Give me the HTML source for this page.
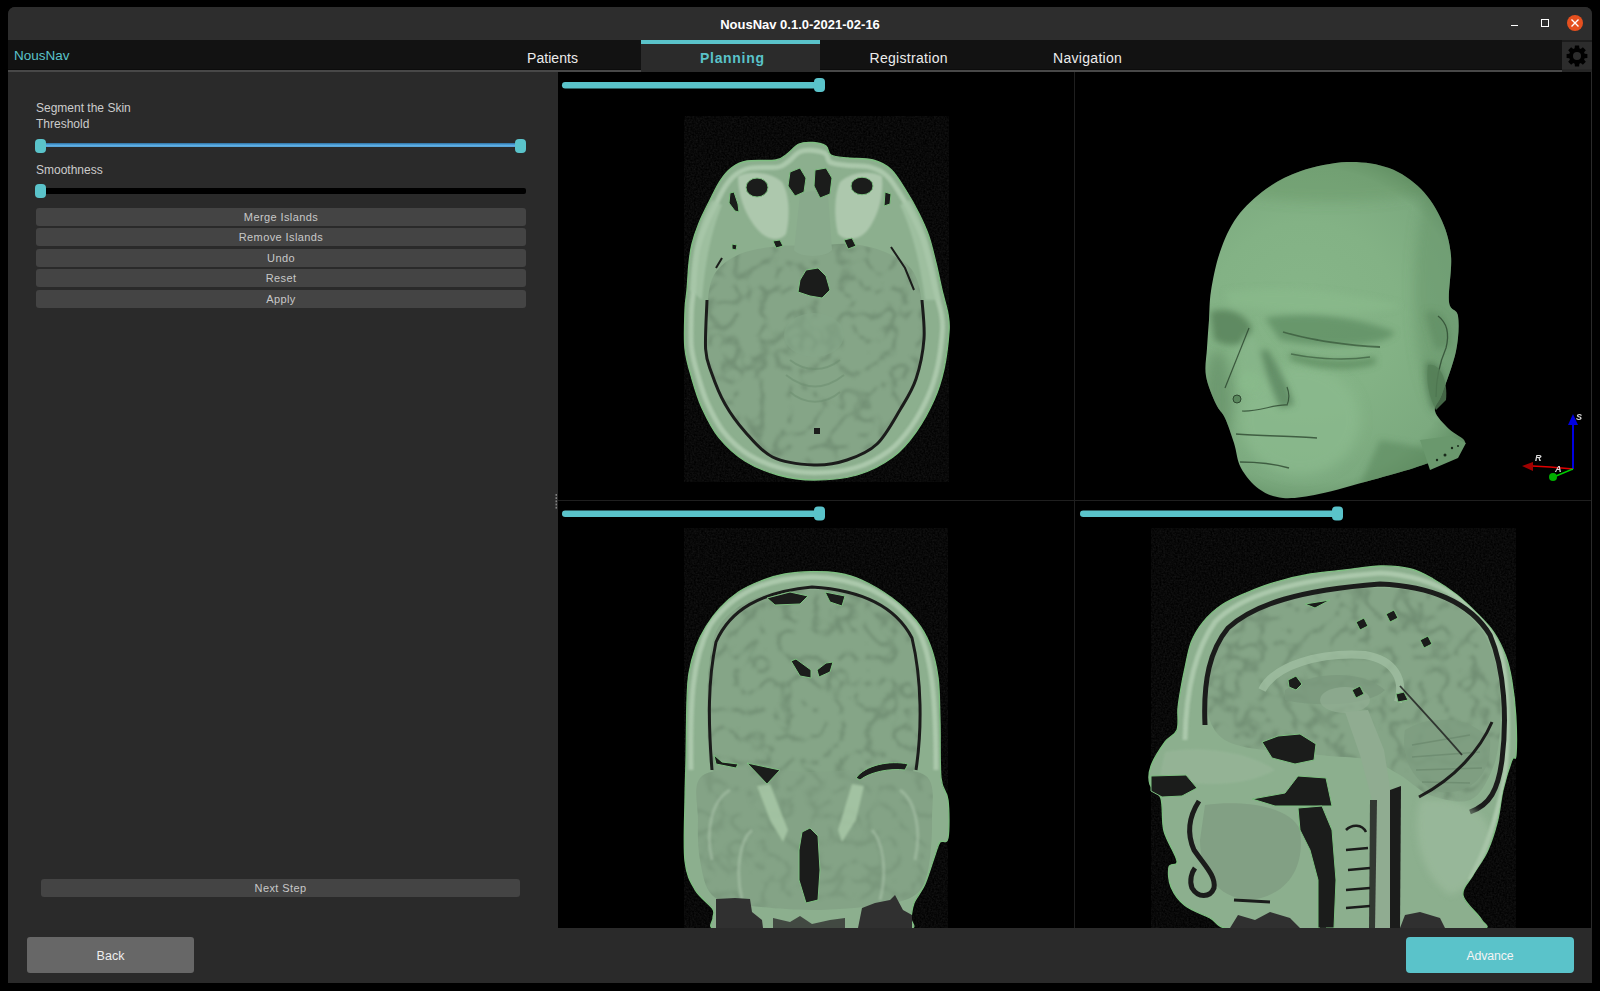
<!DOCTYPE html>
<html><head><meta charset="utf-8">
<style>
*{margin:0;padding:0;box-sizing:border-box}
html,body{width:1600px;height:991px;background:#000;overflow:hidden;font-family:"Liberation Sans",sans-serif}
.a{position:absolute}
#win{left:8px;top:7px;width:1584px;height:976px;background:#2a2a2a;border-radius:7px 7px 0 0;overflow:hidden}
#title{left:0;top:0;width:1584px;height:33px;background:#2d2d2d}
#ttext{left:0;top:1px;width:1584px;height:33px;line-height:33px;text-align:center;color:#fff;font-weight:bold;font-size:13px}
#nav{left:0;top:33px;width:1584px;height:30px;background:#121212}
#navline{left:0;top:63px;width:1554px;height:2px;background:#484848}
#tab{left:633px;top:33px;width:179px;height:32px;background:#2b2b2b}
#tabbar{left:633px;top:33px;width:179px;height:4px;background:#5ac3ca}
.nt{top:36px;height:30px;line-height:31px;color:#ececec;font-size:14px;letter-spacing:0.3px}
#logo{left:6px;top:34px;height:29px;line-height:30px;color:#5ac3ca;font-size:13.5px}
#gear{left:1554px;top:33px;width:30px;height:32px;background:#2c2c2c;border-top:2px solid #1c1c1c;border-bottom:3px solid #262626}
.lbl{color:#cccccc;font-size:12px}
.btn{left:28px;width:490px;height:18px;background:#444;border-radius:3px;color:#c8c8c8;font-size:11px;letter-spacing:0.4px;line-height:19px;text-align:center}
.hdl{width:11px;height:14px;background:#5ac3ca;border-radius:4px}
#view{left:550px;top:65px;width:1034px;height:856px;background:#000}
.vs{height:7px;background:#5ac3ca;border-radius:4px}
</style></head><body>
<div id="win" class="a">
  <div id="title" class="a"></div>
  <div id="ttext" class="a">NousNav 0.1.0-2021-02-16</div>
  <!-- window controls -->
  <div class="a" style="left:1503px;top:17.5px;width:7px;height:1.6px;background:#fff"></div>
  <div class="a" style="left:1533px;top:12px;width:8px;height:8px;border:1.6px solid #fff"></div>
  <div class="a" style="left:1559px;top:8px;width:16px;height:16px;border-radius:50%;background:#e5501f"></div>
  <svg class="a" style="left:1559px;top:8px" width="16" height="16"><path d="M4.5 4.5L11.5 11.5M11.5 4.5L4.5 11.5" stroke="#fff" stroke-width="1.4"/></svg>

  <div id="nav" class="a"></div>
  <div id="navline" class="a"></div>
  <div class="a" style="left:0;top:62px;width:1554px;height:1px;background:#0c0c0c"></div>
  <div id="tab" class="a"></div>
  <div id="tabbar" class="a"></div>
  <div id="logo" class="a">NousNav</div>
  <div class="a nt" style="left:519px;letter-spacing:0.05px">Patients</div>
  <div class="a nt" style="left:692px;color:#5ac3ca;font-weight:bold;letter-spacing:0.7px">Planning</div>
  <div class="a nt" style="left:861.5px">Registration</div>
  <div class="a nt" style="left:1045px">Navigation</div>
  <div id="gear" class="a"></div>
  <svg class="a" style="left:1558px;top:37.5px" width="22" height="22" viewBox="-11 -11 22 22"><path fill="#000" fill-rule="evenodd" d="M-2.36 -7.64L-2.11 -10.39L2.11 -10.39L2.36 -7.64L3.73 -7.08L5.86 -8.84L8.84 -5.86L7.08 -3.73L7.64 -2.36L10.39 -2.11L10.39 2.11L7.64 2.36L7.08 3.73L8.84 5.86L5.86 8.84L3.73 7.08L2.36 7.64L2.11 10.39L-2.11 10.39L-2.36 7.64L-3.73 7.08L-5.86 8.84L-8.84 5.86L-7.08 3.73L-7.64 2.36L-10.39 2.11L-10.39 -2.11L-7.64 -2.36L-7.08 -3.73L-8.84 -5.86L-5.86 -8.84L-3.73 -7.08ZM4.0 0A4.0 4.0 0 1 0 -4.0 0A4.0 4.0 0 1 0 4.0 0Z"/></svg>

  <!-- left panel -->
  <div class="a lbl" style="left:28px;top:94px">Segment the Skin</div>
  <div class="a lbl" style="left:28px;top:110px">Threshold</div>
  <div class="a" style="left:30px;top:136px;width:488px;height:4px;background:linear-gradient(#2f6f9e,#4a9ad2 40%,#6dbdf0 80%,#3a7fb0)"></div>
  <div class="a hdl" style="left:27.3px;top:131.8px"></div>
  <div class="a hdl" style="left:507px;top:132px"></div>
  <div class="a lbl" style="left:28px;top:156px">Smoothness</div>
  <div class="a" style="left:28px;top:181px;width:490px;height:6px;background:#000;border-radius:2px"></div>
  <div class="a hdl" style="left:27.3px;top:177px"></div>
  <div class="a btn" style="top:201px">Merge Islands</div>
  <div class="a btn" style="top:221px">Remove Islands</div>
  <div class="a btn" style="top:242px">Undo</div>
  <div class="a btn" style="top:262px">Reset</div>
  <div class="a btn" style="top:283px">Apply</div>
  <div class="a btn" style="left:33px;width:479px;height:18px;line-height:18px;top:872px">Next Step</div>
  <div class="a" style="left:19px;top:930px;width:167px;height:36px;background:#676767;border-radius:3px;color:#eee;font-size:12.5px;line-height:38px;text-align:center">Back</div>
  <div class="a" style="left:1398px;top:930px;width:168px;height:36px;background:#5ac3ca;border-radius:4px;color:#f4f4f4;font-size:12.3px;letter-spacing:-0.1px;line-height:39px;text-align:center">Advance</div>

  <!-- viewers -->
  <div id="view" class="a">
  </div>
</div>

<svg id="mri" class="a" style="left:0;top:0" width="1600" height="991" viewBox="0 0 1600 991">
<clipPath id="vc"><rect x="550" y="72" width="1042" height="856"/></clipPath>
<g clip-path="url(#vc)">

<defs>
 <radialGradient id="hg" cx="0.42" cy="0.40" r="0.65">
  <stop offset="0" stop-color="#8fbb91"/>
  <stop offset="0.55" stop-color="#84ae86"/>
  <stop offset="0.85" stop-color="#77a17a"/>
  <stop offset="1" stop-color="#5d8461"/>
 </radialGradient>
 <filter id="blur1" filterUnits="userSpaceOnUse" x="0" y="0" width="1600" height="991"><feGaussianBlur stdDeviation="1.2"/></filter>
 <filter id="blur3" filterUnits="userSpaceOnUse" x="0" y="0" width="1600" height="991"><feGaussianBlur stdDeviation="3"/></filter>
 <filter id="gyri" filterUnits="userSpaceOnUse" x="0" y="0" width="1600" height="991" color-interpolation-filters="sRGB">
  <feTurbulence type="turbulence" baseFrequency="0.038" numOctaves="2" seed="11" result="t"/>
  <feColorMatrix in="t" type="matrix" values="0 0 0 0 0.40  0 0 0 0 0.51  0 0 0 0 0.41  -4.2 0 0 0 0.85" result="c"/>
  <feGaussianBlur in="c" stdDeviation="1.4"/>
  <feComposite in2="SourceAlpha" operator="in"/>
 </filter>
 <filter id="spk" filterUnits="userSpaceOnUse" x="0" y="0" width="1600" height="991" color-interpolation-filters="sRGB">
  <feTurbulence type="fractalNoise" baseFrequency="0.55" numOctaves="2" seed="3"/>
  <feColorMatrix type="matrix" values="0.11 0 0 0 -0.02  0.11 0 0 0 -0.02  0.11 0 0 0 -0.02  0 0 0 0 1"/>
  <feComposite in2="SourceAlpha" operator="in"/>
 </filter>
 <filter id="blur6" filterUnits="userSpaceOnUse" x="0" y="0" width="1600" height="991"><feGaussianBlur stdDeviation="6"/></filter>
</defs>

<rect x="1074" y="72" width="1" height="856" fill="#1f1f1f"/>
<rect x="558" y="500" width="1033" height="1" fill="#1f1f1f"/>
<rect x="1591" y="72" width="1" height="856" fill="#2a2a2a"/>
<rect x="684" y="116" width="265" height="366" fill="#0b0b0b" filter="url(#spk)"/>
<path fill="#8caf8e" stroke="#7dbf80" stroke-width="1.3" d="M813.0 142.5C817.5 142.8 823.0 143.9 826.0 146.0C829.0 148.1 827.3 153.0 831.0 155.0C834.7 157.0 841.0 157.2 848.0 158.0C855.0 158.8 865.8 158.1 873.0 160.0C880.2 161.9 885.5 164.4 891.0 169.5C896.5 174.6 901.3 183.2 906.0 190.5C910.7 197.8 915.2 205.9 919.0 213.6C922.8 221.3 926.2 228.4 929.0 236.6C931.8 244.8 933.8 254.1 936.0 263.0C938.2 271.9 940.0 281.5 942.0 290.0C944.0 298.5 946.8 307.0 948.0 314.0C949.2 321.0 949.7 322.8 949.0 332.0C948.3 341.2 946.5 357.7 944.0 369.0C941.5 380.3 938.7 389.5 934.0 400.0C929.3 410.5 922.8 422.5 916.0 432.0C909.2 441.5 902.8 449.8 893.0 457.0C883.2 464.2 870.2 471.2 857.0 475.0C843.8 478.8 827.2 480.0 814.0 480.0C800.8 480.0 789.5 478.2 778.0 475.0C766.5 471.8 754.8 467.2 745.0 461.0C735.2 454.8 726.2 446.4 719.0 437.6C711.8 428.8 706.5 417.8 702.0 408.0C697.5 398.2 694.8 388.8 692.0 379.0C689.2 369.2 686.2 360.5 685.0 349.0C683.8 337.5 684.7 319.8 685.0 310.0C685.3 300.2 686.3 297.8 687.0 290.0C687.7 282.2 688.2 270.7 689.0 263.0C689.8 255.3 690.3 250.7 692.0 244.0C693.7 237.3 696.2 230.0 699.0 223.0C701.8 216.0 705.5 209.0 709.0 202.0C712.5 195.0 716.2 186.8 720.0 181.0C723.8 175.2 727.5 170.8 732.0 167.5C736.5 164.2 739.7 162.2 747.0 161.0C754.3 159.8 769.3 161.2 776.0 160.0C782.7 158.8 783.2 156.7 787.0 154.0C790.8 151.3 794.7 145.9 799.0 144.0C803.3 142.1 808.5 142.2 813.0 142.5Z"/>
<clipPath id="axc"><path d="M813.0 142.5C817.5 142.8 823.0 143.9 826.0 146.0C829.0 148.1 827.3 153.0 831.0 155.0C834.7 157.0 841.0 157.2 848.0 158.0C855.0 158.8 865.8 158.1 873.0 160.0C880.2 161.9 885.5 164.4 891.0 169.5C896.5 174.6 901.3 183.2 906.0 190.5C910.7 197.8 915.2 205.9 919.0 213.6C922.8 221.3 926.2 228.4 929.0 236.6C931.8 244.8 933.8 254.1 936.0 263.0C938.2 271.9 940.0 281.5 942.0 290.0C944.0 298.5 946.8 307.0 948.0 314.0C949.2 321.0 949.7 322.8 949.0 332.0C948.3 341.2 946.5 357.7 944.0 369.0C941.5 380.3 938.7 389.5 934.0 400.0C929.3 410.5 922.8 422.5 916.0 432.0C909.2 441.5 902.8 449.8 893.0 457.0C883.2 464.2 870.2 471.2 857.0 475.0C843.8 478.8 827.2 480.0 814.0 480.0C800.8 480.0 789.5 478.2 778.0 475.0C766.5 471.8 754.8 467.2 745.0 461.0C735.2 454.8 726.2 446.4 719.0 437.6C711.8 428.8 706.5 417.8 702.0 408.0C697.5 398.2 694.8 388.8 692.0 379.0C689.2 369.2 686.2 360.5 685.0 349.0C683.8 337.5 684.7 319.8 685.0 310.0C685.3 300.2 686.3 297.8 687.0 290.0C687.7 282.2 688.2 270.7 689.0 263.0C689.8 255.3 690.3 250.7 692.0 244.0C693.7 237.3 696.2 230.0 699.0 223.0C701.8 216.0 705.5 209.0 709.0 202.0C712.5 195.0 716.2 186.8 720.0 181.0C723.8 175.2 727.5 170.8 732.0 167.5C736.5 164.2 739.7 162.2 747.0 161.0C754.3 159.8 769.3 161.2 776.0 160.0C782.7 158.8 783.2 156.7 787.0 154.0C790.8 151.3 794.7 145.9 799.0 144.0C803.3 142.1 808.5 142.2 813.0 142.5Z"/></clipPath>
<path clip-path="url(#axc)" fill="none" stroke="#b3cfb3" stroke-width="5" opacity="0.8" filter="url(#blur1)" d="M813.1 150.4C817.4 150.7 822.6 151.8 825.5 153.7C828.4 155.7 826.8 160.4 830.2 162.3C833.7 164.2 839.8 164.4 846.4 165.2C853.0 166.0 863.3 165.3 870.1 167.1C877.0 168.9 882.0 171.3 887.2 176.2C892.5 181.0 897.1 189.2 901.5 196.2C905.9 203.3 910.2 211.0 913.9 218.3C917.5 225.6 920.7 232.4 923.4 240.3C926.0 248.1 927.9 257.0 930.0 265.5C932.1 274.0 933.8 283.1 935.7 291.3C937.6 299.4 940.3 307.5 941.4 314.2C942.5 320.9 943.0 322.6 942.4 331.4C941.7 340.1 940.0 355.9 937.6 366.7C935.2 377.5 932.5 386.3 928.1 396.3C923.7 406.3 917.5 417.8 911.0 426.9C904.5 435.9 898.5 443.9 889.1 450.7C879.8 457.6 867.5 464.3 855.0 467.9C842.4 471.6 826.6 472.7 814.1 472.7C801.6 472.7 790.8 471.0 779.9 467.9C769.0 464.9 757.9 460.5 748.5 454.6C739.2 448.6 730.7 440.7 723.9 432.2C717.0 423.8 712.0 413.3 707.7 403.9C703.4 394.6 700.9 385.6 698.2 376.3C695.5 366.9 692.7 358.6 691.5 347.6C690.4 336.6 691.2 319.8 691.5 310.4C691.9 301.0 692.8 298.7 693.5 291.3C694.1 283.8 694.6 272.8 695.4 265.5C696.1 258.2 696.6 253.7 698.2 247.3C699.8 241.0 702.2 234.0 704.9 227.3C707.5 220.6 711.0 213.9 714.4 207.2C717.7 200.5 721.2 192.7 724.8 187.2C728.4 181.7 731.9 177.5 736.2 174.3C740.5 171.1 743.5 169.3 750.5 168.1C757.4 166.9 771.7 168.2 778.0 167.1C784.3 166.0 784.8 163.9 788.5 161.4C792.1 158.8 795.7 153.7 799.9 151.8C804.0 150.0 808.9 150.1 813.1 150.4Z"/>
<path fill="#85a587" d="M814.0 246.0C825.7 245.7 838.2 243.0 850.0 244.0C861.8 245.0 874.7 247.7 885.0 252.0C895.3 256.3 905.8 261.7 912.0 270.0C918.2 278.3 920.0 290.5 922.0 302.0C924.0 313.5 925.0 326.2 924.0 339.0C923.0 351.8 919.9 367.1 916.0 378.6C912.1 390.1 907.0 397.2 900.5 408.0C894.0 418.8 885.9 435.0 877.0 443.5C868.1 452.0 857.5 455.6 847.0 459.0C836.5 462.4 826.4 464.3 814.0 464.0C801.6 463.7 784.0 462.4 772.5 457.0C761.0 451.6 752.9 440.5 745.0 431.7C737.1 422.9 730.6 413.8 725.0 404.0C719.4 394.2 714.7 381.9 711.5 372.7C708.3 363.5 706.4 359.4 705.6 349.0C704.9 338.6 705.6 322.3 707.0 310.0C708.4 297.7 708.5 284.3 714.0 275.0C719.5 265.7 729.0 258.8 740.0 254.0C751.0 249.2 767.7 247.3 780.0 246.0C792.3 244.7 802.3 246.3 814.0 246.0Z"/>
<path fill="#000" filter="url(#gyri)" opacity="0.8" d="M814.0 246.0C825.7 245.7 838.2 243.0 850.0 244.0C861.8 245.0 874.7 247.7 885.0 252.0C895.3 256.3 905.8 261.7 912.0 270.0C918.2 278.3 920.0 290.5 922.0 302.0C924.0 313.5 925.0 326.2 924.0 339.0C923.0 351.8 919.9 367.1 916.0 378.6C912.1 390.1 907.0 397.2 900.5 408.0C894.0 418.8 885.9 435.0 877.0 443.5C868.1 452.0 857.5 455.6 847.0 459.0C836.5 462.4 826.4 464.3 814.0 464.0C801.6 463.7 784.0 462.4 772.5 457.0C761.0 451.6 752.9 440.5 745.0 431.7C737.1 422.9 730.6 413.8 725.0 404.0C719.4 394.2 714.7 381.9 711.5 372.7C708.3 363.5 706.4 359.4 705.6 349.0C704.9 338.6 705.6 322.3 707.0 310.0C708.4 297.7 708.5 284.3 714.0 275.0C719.5 265.7 729.0 258.8 740.0 254.0C751.0 249.2 767.7 247.3 780.0 246.0C792.3 244.7 802.3 246.3 814.0 246.0Z"/>
<path fill="none" stroke="#1b1c1b" stroke-width="3" d="M707.0 300.0C706.8 308.2 704.9 336.9 705.6 349.0C706.4 361.1 708.3 363.5 711.5 372.7C714.7 381.9 719.4 394.2 725.0 404.0C730.6 413.8 737.1 422.9 745.0 431.7C752.9 440.5 761.0 451.4 772.5 457.0C784.0 462.6 801.6 464.5 814.0 465.0C826.4 465.5 836.5 463.5 847.0 460.0C857.5 456.5 868.1 452.5 877.0 444.0C885.9 435.5 894.0 419.8 900.5 409.0C907.0 398.2 912.1 390.7 916.0 379.0C919.9 367.3 923.0 352.2 924.0 339.0C925.0 325.8 922.3 306.5 922.0 300.0"/>
<path fill="#a6c6a7" opacity="0.7" filter="url(#blur1)" d="M690 290 C692 250 700 220 712 200 L722 205 C712 230 705 260 702 300Z"/>
<path fill="#a6c6a7" opacity="0.7" filter="url(#blur1)" d="M940 300 C935 260 925 225 910 200 L900 205 C912 230 920 262 925 300Z"/>
<path fill="#adc8ad" filter="url(#blur1)" d="M738 176 C750 170 770 172 782 182 C790 195 790 218 786 234 C780 242 768 240 760 232 C748 220 738 200 738 176Z"/>
<path fill="#adc8ad" filter="url(#blur1)" d="M882 176 C870 170 850 172 840 182 C834 195 834 218 838 234 C846 242 858 240 866 232 C876 220 884 200 882 176Z"/>
<path fill="#89aa8c" d="M800 195 C805 190 822 190 828 195 L832 250 C825 258 800 258 794 250Z"/>
<ellipse cx="757" cy="187.5" rx="11" ry="9.5" fill="#1b1c1b" stroke="#7dbf80"/>
<ellipse cx="862" cy="186" rx="11" ry="8.8" fill="#1b1c1b" stroke="#7dbf80"/>
<path fill="#1b1c1b" stroke="#7dbf80" stroke-width="1" d="M790 172 L800 168 L806 178 L804 192 L795 196 L788 186Z"/>
<path fill="#1b1c1b" stroke="#7dbf80" stroke-width="1" d="M815 170 L826 168 L832 178 L830 194 L820 198 L814 186Z"/>
<path fill="#1b1c1b" stroke="#7dbf80" stroke-width="1" d="M885 192 L891 194 L890 204 L884 206Z"/>
<path fill="#1b1c1b" stroke="#7dbf80" stroke-width="1" d="M800 280 L806 270 L818 268 L826 276 L830 290 L822 298 L810 296 L798 292Z"/>
<path fill="#1b1c1b" stroke="#7dbf80" stroke-width="1" d="M730 193 L734 192 L738 204 L739 212 L735 211 L729 203Z"/>
<path fill="#1b1c1b" stroke="#7dbf80" stroke-width="1" d="M773 241 L780 240 L783 246 L776 248Z M732 244 L737 245 L736 250 L732 249Z M844 240 L852 238 L856 246 L848 249Z"/>
<path fill="none" stroke="#1b1c1b" stroke-width="2" d="M891 247 L905 268 L914 290"/>
<path fill="none" stroke="#1b1c1b" stroke-width="2" d="M722 258 L716 268"/>
<ellipse cx="814" cy="335" rx="30" ry="22" fill="#86a689" opacity="0.6"/>
<path fill="none" stroke="#6e8f72" stroke-width="2" opacity="0.6" d="M790 360 C805 372 825 372 840 360 M786 375 C805 390 825 390 844 375 M790 392 C805 405 825 405 840 392"/>
<rect x="814" y="428" width="6" height="6" fill="#1b1c1b"/>
<radialGradient id="hg2" gradientUnits="userSpaceOnUse" cx="1310" cy="330" r="185" fx="1300" fy="300"><stop offset="0" stop-color="#86b588"/><stop offset="0.5" stop-color="#83b285"/><stop offset="0.85" stop-color="#7caa7f"/><stop offset="1" stop-color="#628f65"/></radialGradient>
<clipPath id="hc"><path d="M1347.0 162.0C1361.7 161.5 1376.7 163.5 1389.0 168.0C1401.3 172.5 1412.2 180.2 1421.0 189.0C1429.8 197.8 1437.0 209.8 1442.0 221.0C1447.0 232.2 1449.8 242.5 1451.0 256.0C1452.2 269.5 1447.8 292.0 1449.0 302.0C1450.2 312.0 1456.8 307.8 1458.0 316.0C1459.2 324.2 1458.7 338.0 1456.0 351.0C1453.3 364.0 1445.5 384.0 1442.0 394.0C1438.5 404.0 1433.8 405.2 1435.0 411.0C1436.2 416.8 1444.0 423.7 1449.0 429.0C1454.0 434.3 1466.2 438.3 1465.0 443.0C1463.8 447.7 1450.5 452.8 1442.0 457.0C1433.5 461.2 1425.7 464.2 1414.0 468.0C1402.3 471.8 1387.8 475.7 1372.0 480.0C1356.2 484.3 1333.8 491.0 1319.0 494.0C1304.2 497.0 1293.0 498.8 1283.0 498.0C1273.0 497.2 1266.0 494.0 1259.0 489.0C1252.0 484.0 1245.2 475.7 1241.0 468.0C1236.8 460.3 1236.7 451.3 1234.0 443.0C1231.3 434.7 1228.0 424.5 1225.0 418.0C1222.0 411.5 1219.2 411.0 1216.0 404.0C1212.8 397.0 1207.5 385.3 1206.0 376.0C1204.5 366.7 1206.5 357.3 1207.0 348.0C1207.5 338.7 1208.3 329.5 1209.0 320.0C1209.7 310.5 1209.2 302.3 1211.0 291.0C1212.8 279.7 1215.7 264.3 1220.0 252.0C1224.3 239.7 1229.3 227.5 1237.0 217.0C1244.7 206.5 1255.3 196.7 1266.0 189.0C1276.7 181.3 1287.5 175.5 1301.0 171.0C1314.5 166.5 1332.3 162.5 1347.0 162.0Z"/></clipPath>
<path fill="url(#hg2)" d="M1347.0 162.0C1361.7 161.5 1376.7 163.5 1389.0 168.0C1401.3 172.5 1412.2 180.2 1421.0 189.0C1429.8 197.8 1437.0 209.8 1442.0 221.0C1447.0 232.2 1449.8 242.5 1451.0 256.0C1452.2 269.5 1447.8 292.0 1449.0 302.0C1450.2 312.0 1456.8 307.8 1458.0 316.0C1459.2 324.2 1458.7 338.0 1456.0 351.0C1453.3 364.0 1445.5 384.0 1442.0 394.0C1438.5 404.0 1433.8 405.2 1435.0 411.0C1436.2 416.8 1444.0 423.7 1449.0 429.0C1454.0 434.3 1466.2 438.3 1465.0 443.0C1463.8 447.7 1450.5 452.8 1442.0 457.0C1433.5 461.2 1425.7 464.2 1414.0 468.0C1402.3 471.8 1387.8 475.7 1372.0 480.0C1356.2 484.3 1333.8 491.0 1319.0 494.0C1304.2 497.0 1293.0 498.8 1283.0 498.0C1273.0 497.2 1266.0 494.0 1259.0 489.0C1252.0 484.0 1245.2 475.7 1241.0 468.0C1236.8 460.3 1236.7 451.3 1234.0 443.0C1231.3 434.7 1228.0 424.5 1225.0 418.0C1222.0 411.5 1219.2 411.0 1216.0 404.0C1212.8 397.0 1207.5 385.3 1206.0 376.0C1204.5 366.7 1206.5 357.3 1207.0 348.0C1207.5 338.7 1208.3 329.5 1209.0 320.0C1209.7 310.5 1209.2 302.3 1211.0 291.0C1212.8 279.7 1215.7 264.3 1220.0 252.0C1224.3 239.7 1229.3 227.5 1237.0 217.0C1244.7 206.5 1255.3 196.7 1266.0 189.0C1276.7 181.3 1287.5 175.5 1301.0 171.0C1314.5 166.5 1332.3 162.5 1347.0 162.0Z"/>
<g clip-path="url(#hc)">
<g filter="url(#blur6)">
<ellipse cx="1330" cy="178" rx="120" ry="24" fill="#62905f" opacity="0.35"/>
<ellipse cx="1448" cy="290" rx="34" ry="125" fill="#66936a" opacity="0.5"/>
<ellipse cx="1300" cy="420" rx="60" ry="55" fill="#8cbb8e" opacity="0.7"/>
<ellipse cx="1218" cy="400" rx="14" ry="50" fill="#5f8b62" opacity="0.6"/>
</g>
<g filter="url(#blur3)">
<path fill="#557f58" opacity="0.8" d="M1210 312 C1225 306 1245 312 1252 328 C1248 345 1232 350 1214 340Z"/>
<path fill="#5d8a60" opacity="0.7" d="M1265 318 C1310 310 1360 318 1395 332 C1390 346 1330 350 1280 340Z"/>
<path fill="#5a875d" opacity="0.7" d="M1290 352 C1320 362 1355 362 1375 356 L1376 364 C1350 372 1318 370 1290 360Z"/>
<path fill="#8aba8c" opacity="0.6" d="M1225 292 C1270 285 1340 290 1400 305 C1390 316 1300 314 1230 306Z"/>
<path fill="#88b78a" opacity="0.7" d="M1252 335 C1262 350 1268 372 1260 392 L1240 392 C1238 370 1240 350 1244 335Z"/>
<circle cx="1250" cy="382" r="11" fill="#8aba8c" opacity="0.7"/>
<path fill="#567f59" opacity="0.7" d="M1268 350 C1280 370 1290 388 1294 405 L1280 408 C1272 390 1264 370 1260 350Z"/>
<path fill="#5b885e" opacity="0.6" d="M1380 440 C1410 445 1440 450 1450 460 L1400 490 L1360 485Z"/>
<path fill="#4f7852" opacity="0.7" d="M1426 362 C1440 360 1450 382 1446 405 L1432 410 C1426 392 1424 375 1426 362Z"/>
<path fill="#5d8a60" opacity="0.6" d="M1425 312 C1440 306 1452 322 1450 346 L1436 350 C1430 335 1427 322 1425 312Z"/>
</g>
</g>
<path fill="none" stroke="#2d472f" stroke-width="1.3" opacity="0.8" d="M1438 316 C1446 322 1450 332 1446 348 C1440 362 1436 380 1436 397"/>
<path fill="#557f58" opacity="0.8" d="M1428 365 C1440 362 1448 380 1446 400 L1436 410 C1428 395 1426 380 1428 365Z"/>
<path fill="none" stroke="#2d472f" stroke-width="1.2" opacity="0.85" d="M1249 328 C1240 350 1232 370 1225 388"/>
<circle cx="1237" cy="399" r="4" fill="#5a875d" stroke="#2d472f" stroke-width="1"/>
<path fill="none" stroke="#2d472f" stroke-width="1.2" opacity="0.8" d="M1242 411 C1258 412 1275 404 1287 405 C1290 398 1289 392 1287 387"/>
<path fill="none" stroke="#3b5b3d" stroke-width="1.8" opacity="0.8" d="M1283 332 C1310 340 1350 346 1380 347"/>
<path fill="none" stroke="#3b5b3d" stroke-width="1.5" opacity="0.7" d="M1291 354 C1320 360 1350 360 1370 357"/>
<path fill="none" stroke="#2d472f" stroke-width="1.6" opacity="0.8" d="M1236 434 C1260 436 1295 436 1317 438"/>
<path fill="none" stroke="#2d472f" stroke-width="1.6" opacity="0.8" d="M1240 462 C1258 462 1275 464 1289 468"/>
<path fill="#6a986d" d="M1420 440 L1450 436 L1466 443 L1458 458 L1430 470 Z"/>
<circle cx="1445" cy="455" r="1.5" fill="#1a2a1b"/><circle cx="1452" cy="448" r="1.2" fill="#1a2a1b"/><circle cx="1437" cy="460" r="1.2" fill="#1a2a1b"/><circle cx="1458" cy="446" r="1" fill="#1a2a1b"/>
<rect x="684" y="528" width="264" height="400" fill="#0b0b0b" filter="url(#spk)"/>
<path fill="#8caf8e" stroke="#7dbf80" stroke-width="1.3" d="M811.0 571.7C819.7 571.5 828.6 571.6 837.0 573.0C845.4 574.4 852.4 575.8 861.6 580.0C870.8 584.2 882.9 591.2 892.0 598.0C901.1 604.8 909.7 612.7 916.0 620.5C922.3 628.3 926.3 635.3 930.0 644.7C933.7 654.1 936.3 664.3 938.0 677.0C939.7 689.7 939.5 704.2 940.0 721.0C940.5 737.8 939.7 764.8 941.0 778.0C942.3 791.2 946.8 790.0 948.0 800.0C949.2 810.0 949.3 831.0 948.0 838.0C946.7 845.0 942.2 839.2 940.0 842.0C937.8 844.8 937.5 848.0 935.0 855.0C932.5 862.0 928.5 876.0 925.0 884.0C921.5 892.0 916.3 897.3 914.0 903.0C911.7 908.7 911.7 913.7 911.0 918.0C910.3 922.3 918.5 927.0 910.0 929.0C901.5 931.0 885.0 929.8 860.0 930.0C835.0 930.2 784.2 930.2 760.0 930.0C735.8 929.8 722.3 931.0 714.5 929.0C706.7 927.0 713.3 921.4 713.0 918.0C712.7 914.6 715.6 913.4 712.6 908.7C709.6 904.0 699.6 897.6 695.0 889.6C690.4 881.6 686.7 875.9 685.0 861.0C683.3 846.1 684.8 816.8 685.0 800.0C685.2 783.2 685.7 776.5 686.0 760.0C686.3 743.5 686.5 715.5 687.0 701.0C687.5 686.5 687.5 682.0 689.0 673.0C690.5 664.0 693.2 654.5 696.0 646.8C698.8 639.1 702.0 633.1 706.0 626.6C710.0 620.1 714.6 613.8 720.0 608.0C725.4 602.2 731.7 596.5 738.5 592.0C745.3 587.5 753.0 584.0 760.7 581.0C768.5 578.0 776.6 575.5 785.0 574.0C793.4 572.5 802.3 571.9 811.0 571.7Z"/>
<clipPath id="coc"><path d="M811.0 571.7C819.7 571.5 828.6 571.6 837.0 573.0C845.4 574.4 852.4 575.8 861.6 580.0C870.8 584.2 882.9 591.2 892.0 598.0C901.1 604.8 909.7 612.7 916.0 620.5C922.3 628.3 926.3 635.3 930.0 644.7C933.7 654.1 936.3 664.3 938.0 677.0C939.7 689.7 939.5 704.2 940.0 721.0C940.5 737.8 939.7 764.8 941.0 778.0C942.3 791.2 946.8 790.0 948.0 800.0C949.2 810.0 949.3 831.0 948.0 838.0C946.7 845.0 942.2 839.2 940.0 842.0C937.8 844.8 937.5 848.0 935.0 855.0C932.5 862.0 928.5 876.0 925.0 884.0C921.5 892.0 916.3 897.3 914.0 903.0C911.7 908.7 911.7 913.7 911.0 918.0C910.3 922.3 918.5 927.0 910.0 929.0C901.5 931.0 885.0 929.8 860.0 930.0C835.0 930.2 784.2 930.2 760.0 930.0C735.8 929.8 722.3 931.0 714.5 929.0C706.7 927.0 713.3 921.4 713.0 918.0C712.7 914.6 715.6 913.4 712.6 908.7C709.6 904.0 699.6 897.6 695.0 889.6C690.4 881.6 686.7 875.9 685.0 861.0C683.3 846.1 684.8 816.8 685.0 800.0C685.2 783.2 685.7 776.5 686.0 760.0C686.3 743.5 686.5 715.5 687.0 701.0C687.5 686.5 687.5 682.0 689.0 673.0C690.5 664.0 693.2 654.5 696.0 646.8C698.8 639.1 702.0 633.1 706.0 626.6C710.0 620.1 714.6 613.8 720.0 608.0C725.4 602.2 731.7 596.5 738.5 592.0C745.3 587.5 753.0 584.0 760.7 581.0C768.5 578.0 776.6 575.5 785.0 574.0C793.4 572.5 802.3 571.9 811.0 571.7Z"/></clipPath>
<path clip-path="url(#coc)" fill="none" stroke="#b3cfb3" stroke-width="5" opacity="0.8" filter="url(#blur1)" d="M691 770 C690 700 692 660 710 625 C735 590 770 578 812 577 C855 578 890 592 915 625 C932 650 936 700 936 770"/>
<path fill="#85a587" d="M812.0 590.0C824.5 590.0 837.8 589.3 850.0 592.0C862.2 594.7 875.3 599.3 885.0 606.0C894.7 612.7 902.5 619.7 908.0 632.0C913.5 644.3 916.0 662.0 918.0 680.0C920.0 698.0 921.0 724.7 920.0 740.0C919.0 755.3 918.7 765.3 912.0 772.0C905.3 778.7 896.7 778.3 880.0 780.0C863.3 781.7 834.5 782.0 812.0 782.0C789.5 782.0 761.3 781.7 745.0 780.0C728.7 778.3 720.2 778.7 714.0 772.0C707.8 765.3 709.0 755.3 708.0 740.0C707.0 724.7 706.7 698.0 708.0 680.0C709.3 662.0 710.7 644.3 716.0 632.0C721.3 619.7 730.2 612.7 740.0 606.0C749.8 599.3 763.0 594.7 775.0 592.0C787.0 589.3 799.5 590.0 812.0 590.0Z"/>
<path fill="#000" filter="url(#gyri)" opacity="0.8" d="M812.0 590.0C824.5 590.0 837.8 589.3 850.0 592.0C862.2 594.7 875.3 599.3 885.0 606.0C894.7 612.7 902.5 619.7 908.0 632.0C913.5 644.3 916.0 662.0 918.0 680.0C920.0 698.0 921.0 724.7 920.0 740.0C919.0 755.3 918.7 765.3 912.0 772.0C905.3 778.7 896.7 778.3 880.0 780.0C863.3 781.7 834.5 782.0 812.0 782.0C789.5 782.0 761.3 781.7 745.0 780.0C728.7 778.3 720.2 778.7 714.0 772.0C707.8 765.3 709.0 755.3 708.0 740.0C707.0 724.7 706.7 698.0 708.0 680.0C709.3 662.0 710.7 644.3 716.0 632.0C721.3 619.7 730.2 612.7 740.0 606.0C749.8 599.3 763.0 594.7 775.0 592.0C787.0 589.3 799.5 590.0 812.0 590.0Z"/>
<path fill="none" stroke="#1b1c1b" stroke-width="3" d="M712 770 C708 720 708 680 716 642 C730 610 760 592 812 587 C860 590 895 605 912 638 C922 680 922 730 916 770"/>
<path fill="#1b1c1b" stroke="#7dbf80" stroke-width="1" d="M767 598 L790 592 L808 596 L800 604 L775 605 Z M825 592 L845 596 L842 606 L830 602Z"/>
<path fill="#1b1c1b" stroke="#7dbf80" stroke-width="1" d="M791 661 L796 659 L811 670 L811 678 L800 676 Z M817 670 L826 663 L833 662 L830 672 L819 677Z"/>
<path fill="#84a386" d="M702.0 776.0C712.3 767.7 741.7 770.7 760.0 770.0C778.3 769.3 793.7 772.0 812.0 772.0C830.3 772.0 851.0 769.3 870.0 770.0C889.0 770.7 915.7 767.7 926.0 776.0C936.3 784.3 931.7 804.3 932.0 820.0C932.3 835.7 930.8 857.5 928.0 870.0C925.2 882.5 923.0 889.2 915.0 895.0C907.0 900.8 897.2 902.5 880.0 905.0C862.8 907.5 834.5 910.0 812.0 910.0C789.5 910.0 761.7 907.5 745.0 905.0C728.3 902.5 719.5 902.5 712.0 895.0C704.5 887.5 702.3 872.5 700.0 860.0C697.7 847.5 697.7 834.0 698.0 820.0C698.3 806.0 691.7 784.3 702.0 776.0Z"/>
<path fill="#000" filter="url(#gyri)" opacity="0.45" d="M702.0 776.0C712.3 767.7 741.7 770.7 760.0 770.0C778.3 769.3 793.7 772.0 812.0 772.0C830.3 772.0 851.0 769.3 870.0 770.0C889.0 770.7 915.7 767.7 926.0 776.0C936.3 784.3 931.7 804.3 932.0 820.0C932.3 835.7 930.8 857.5 928.0 870.0C925.2 882.5 923.0 889.2 915.0 895.0C907.0 900.8 897.2 902.5 880.0 905.0C862.8 907.5 834.5 910.0 812.0 910.0C789.5 910.0 761.7 907.5 745.0 905.0C728.3 902.5 719.5 902.5 712.0 895.0C704.5 887.5 702.3 872.5 700.0 860.0C697.7 847.5 697.7 834.0 698.0 820.0C698.3 806.0 691.7 784.3 702.0 776.0Z"/>
<path fill="none" stroke="#a9c3a9" stroke-width="3" opacity="0.6" filter="url(#blur1)" d="M712 860 C705 830 712 800 730 790 M915 860 C922 830 915 800 900 790 M742 900 C735 870 740 840 752 830 M880 900 C888 870 882 840 872 830"/>
<path fill="#aacaa9" opacity="0.8" filter="url(#blur1)" d="M757 786 L770 784 L788 830 L783 842 L770 820Z"/>
<path fill="#aacaa9" opacity="0.8" filter="url(#blur1)" d="M864 786 L852 784 L838 830 L842 842 L856 820Z"/>
<path fill="#1b1c1b" stroke="#7dbf80" stroke-width="1" d="M747 763 L780 770 L767 784 Z"/>
<path fill="#1b1c1b" stroke="#7dbf80" stroke-width="1" d="M856 778 C865 765 890 760 908 764 L905 770 C890 768 870 772 860 780Z"/>
<path fill="#1b1c1b" stroke="#7dbf80" stroke-width="1" d="M714 755 L722 762 L738 764 L736 768 L716 764Z"/>
<path fill="#1b1c1b" stroke="#7dbf80" stroke-width="1" d="M802 832 L810 828 L818 836 L820 870 L818 900 L806 903 L799 880 L799 850Z"/>
<path fill="#303030" d="M716 899 L735 898 L750 899 L752 912 L762 920 L763 928 L716 928Z"/>
<path fill="#303030" d="M862 908 L875 903 L890 900 L895 895 L903 910 L912 915 L912 928 L858 928Z"/>
<path fill="#303030" opacity="0.8" d="M773 918 L790 922 L800 916 L812 924 L830 920 L845 918 L845 928 L773 928Z"/>
<rect x="1151" y="528" width="365" height="400" fill="#0b0b0b" filter="url(#spk)"/>
<path fill="#8caf8e" stroke="#7dbf80" stroke-width="1.3" d="M1345.0 570.0C1356.7 568.7 1369.5 566.2 1380.5 566.0C1391.5 565.8 1402.0 566.8 1410.8 569.0C1419.5 571.2 1425.3 574.7 1433.0 579.0C1440.7 583.3 1449.7 589.2 1457.0 595.0C1464.3 600.8 1470.9 607.3 1477.0 613.5C1483.1 619.7 1488.8 624.9 1493.6 632.0C1498.4 639.1 1502.7 648.0 1505.7 656.0C1508.7 664.0 1510.0 670.0 1511.7 680.0C1513.4 690.0 1515.1 703.5 1515.8 716.0C1516.5 728.5 1516.6 747.7 1516.0 755.0C1515.4 762.3 1514.2 754.2 1512.0 760.0C1509.8 765.8 1505.4 779.9 1503.0 790.0C1500.6 800.1 1500.2 810.6 1497.6 820.8C1495.0 831.0 1491.6 842.0 1487.5 851.0C1483.4 860.0 1477.1 867.6 1473.0 875.0C1468.9 882.4 1461.6 888.0 1463.0 895.5C1464.4 903.0 1478.7 914.1 1481.5 919.7C1484.3 925.3 1493.6 927.3 1480.0 929.0C1466.4 930.7 1430.0 929.8 1400.0 930.0C1370.0 930.2 1328.3 930.2 1300.0 930.0C1271.7 929.8 1245.0 931.0 1230.0 929.0C1215.0 927.0 1217.5 921.9 1210.0 918.0C1202.5 914.1 1191.5 910.8 1185.0 905.6C1178.5 900.4 1173.7 893.4 1171.0 887.0C1168.3 880.6 1168.0 871.3 1169.0 867.0C1170.0 862.7 1177.8 867.0 1177.0 861.0C1176.2 855.0 1166.7 841.4 1164.0 831.0C1161.3 820.6 1163.3 806.4 1161.0 798.6C1158.7 790.9 1151.7 789.9 1150.0 784.5C1148.3 779.1 1148.5 773.1 1151.0 766.0C1153.5 758.9 1160.7 748.0 1165.0 742.0C1169.3 736.0 1174.8 735.7 1177.0 730.0C1179.2 724.3 1177.3 715.0 1178.0 708.0C1178.7 701.0 1179.8 694.7 1181.0 688.0C1182.2 681.3 1183.3 675.7 1185.0 668.0C1186.7 660.3 1188.3 649.5 1191.4 641.8C1194.5 634.1 1198.5 627.7 1203.5 621.6C1208.5 615.5 1214.6 609.8 1221.7 605.0C1228.8 600.2 1237.0 596.8 1246.0 593.0C1255.0 589.2 1265.2 585.2 1276.0 582.0C1286.8 578.8 1299.0 576.0 1310.5 574.0C1322.0 572.0 1333.3 571.3 1345.0 570.0Z"/>
<clipPath id="sac"><path d="M1345.0 570.0C1356.7 568.7 1369.5 566.2 1380.5 566.0C1391.5 565.8 1402.0 566.8 1410.8 569.0C1419.5 571.2 1425.3 574.7 1433.0 579.0C1440.7 583.3 1449.7 589.2 1457.0 595.0C1464.3 600.8 1470.9 607.3 1477.0 613.5C1483.1 619.7 1488.8 624.9 1493.6 632.0C1498.4 639.1 1502.7 648.0 1505.7 656.0C1508.7 664.0 1510.0 670.0 1511.7 680.0C1513.4 690.0 1515.1 703.5 1515.8 716.0C1516.5 728.5 1516.6 747.7 1516.0 755.0C1515.4 762.3 1514.2 754.2 1512.0 760.0C1509.8 765.8 1505.4 779.9 1503.0 790.0C1500.6 800.1 1500.2 810.6 1497.6 820.8C1495.0 831.0 1491.6 842.0 1487.5 851.0C1483.4 860.0 1477.1 867.6 1473.0 875.0C1468.9 882.4 1461.6 888.0 1463.0 895.5C1464.4 903.0 1478.7 914.1 1481.5 919.7C1484.3 925.3 1493.6 927.3 1480.0 929.0C1466.4 930.7 1430.0 929.8 1400.0 930.0C1370.0 930.2 1328.3 930.2 1300.0 930.0C1271.7 929.8 1245.0 931.0 1230.0 929.0C1215.0 927.0 1217.5 921.9 1210.0 918.0C1202.5 914.1 1191.5 910.8 1185.0 905.6C1178.5 900.4 1173.7 893.4 1171.0 887.0C1168.3 880.6 1168.0 871.3 1169.0 867.0C1170.0 862.7 1177.8 867.0 1177.0 861.0C1176.2 855.0 1166.7 841.4 1164.0 831.0C1161.3 820.6 1163.3 806.4 1161.0 798.6C1158.7 790.9 1151.7 789.9 1150.0 784.5C1148.3 779.1 1148.5 773.1 1151.0 766.0C1153.5 758.9 1160.7 748.0 1165.0 742.0C1169.3 736.0 1174.8 735.7 1177.0 730.0C1179.2 724.3 1177.3 715.0 1178.0 708.0C1178.7 701.0 1179.8 694.7 1181.0 688.0C1182.2 681.3 1183.3 675.7 1185.0 668.0C1186.7 660.3 1188.3 649.5 1191.4 641.8C1194.5 634.1 1198.5 627.7 1203.5 621.6C1208.5 615.5 1214.6 609.8 1221.7 605.0C1228.8 600.2 1237.0 596.8 1246.0 593.0C1255.0 589.2 1265.2 585.2 1276.0 582.0C1286.8 578.8 1299.0 576.0 1310.5 574.0C1322.0 572.0 1333.3 571.3 1345.0 570.0Z"/></clipPath>
<path clip-path="url(#sac)" fill="none" stroke="#b3cfb3" stroke-width="5" opacity="0.8" filter="url(#blur1)" d="M1185 740 C1186 690 1195 650 1215 622 C1240 596 1290 580 1380 573 C1440 576 1480 605 1500 650 C1510 690 1510 760 1500 800 C1490 840 1480 860 1470 880"/>
<path fill="#85a587" d="M1300.0 596.0C1323.3 591.0 1356.7 587.7 1380.0 588.0C1403.3 588.3 1423.3 591.3 1440.0 598.0C1456.7 604.7 1470.3 615.2 1480.0 628.0C1489.7 640.8 1494.7 658.0 1498.0 675.0C1501.3 692.0 1501.0 714.2 1500.0 730.0C1499.0 745.8 1497.0 758.3 1492.0 770.0C1487.0 781.7 1480.3 795.8 1470.0 800.0C1459.7 804.2 1441.7 799.2 1430.0 795.0C1418.3 790.8 1410.0 780.8 1400.0 775.0C1390.0 769.2 1381.7 763.2 1370.0 760.0C1358.3 756.8 1343.3 757.3 1330.0 756.0C1316.7 754.7 1303.3 753.3 1290.0 752.0C1276.7 750.7 1261.3 750.3 1250.0 748.0C1238.7 745.7 1229.0 743.5 1222.0 738.0C1215.0 732.5 1210.5 723.8 1208.0 715.0C1205.5 706.2 1205.8 695.8 1207.0 685.0C1208.2 674.2 1209.5 661.2 1215.0 650.0C1220.5 638.8 1225.8 627.0 1240.0 618.0C1254.2 609.0 1276.7 601.0 1300.0 596.0Z"/>
<path fill="#000" filter="url(#gyri)" opacity="0.8" d="M1300.0 596.0C1323.3 591.0 1356.7 587.7 1380.0 588.0C1403.3 588.3 1423.3 591.3 1440.0 598.0C1456.7 604.7 1470.3 615.2 1480.0 628.0C1489.7 640.8 1494.7 658.0 1498.0 675.0C1501.3 692.0 1501.0 714.2 1500.0 730.0C1499.0 745.8 1497.0 758.3 1492.0 770.0C1487.0 781.7 1480.3 795.8 1470.0 800.0C1459.7 804.2 1441.7 799.2 1430.0 795.0C1418.3 790.8 1410.0 780.8 1400.0 775.0C1390.0 769.2 1381.7 763.2 1370.0 760.0C1358.3 756.8 1343.3 757.3 1330.0 756.0C1316.7 754.7 1303.3 753.3 1290.0 752.0C1276.7 750.7 1261.3 750.3 1250.0 748.0C1238.7 745.7 1229.0 743.5 1222.0 738.0C1215.0 732.5 1210.5 723.8 1208.0 715.0C1205.5 706.2 1205.8 695.8 1207.0 685.0C1208.2 674.2 1209.5 661.2 1215.0 650.0C1220.5 638.8 1225.8 627.0 1240.0 618.0C1254.2 609.0 1276.7 601.0 1300.0 596.0Z"/>
<path fill="none" stroke="#1b1c1b" stroke-width="5" d="M1205 725 C1203 680 1210 650 1228 628 C1255 604 1300 590 1380 584 C1430 586 1470 602 1490 635 C1505 670 1507 720 1502 760 C1498 790 1490 805 1470 812"/>
<path fill="none" stroke="#a2c0a3" stroke-width="8" opacity="0.75" d="M1262 690 C1275 665 1320 652 1365 655 C1395 660 1405 680 1398 702"/>
<path fill="#7b987d" opacity="0.8" d="M1285 690 C1310 672 1360 668 1385 690 C1370 705 1320 708 1285 700Z"/>
<ellipse cx="1345" cy="700" rx="25" ry="13" fill="#92ae93" opacity="0.7"/>
<path fill="#1b1c1b" stroke="#7dbf80" stroke-width="1" d="M1288 680 L1296 676 L1302 684 L1296 690 L1289 687Z M1352 690 L1360 686 L1364 694 L1356 698Z M1396 694 L1404 692 L1408 700 L1398 702Z M1386 614 L1394 610 L1398 618 L1390 622Z M1356 622 L1364 618 L1368 626 L1360 630Z M1420 640 L1428 636 L1432 644 L1424 648Z M1305 604 L1330 600 L1315 608Z"/>
<path fill="#7d9c7f" opacity="0.8" d="M1405 730 C1430 715 1470 715 1490 740 C1492 770 1475 795 1440 792 C1415 785 1400 760 1405 730Z"/>
<path fill="none" stroke="#6a876c" stroke-width="1.5" opacity="0.7" d="M1412 745 L1470 735 M1412 757 L1480 752 M1416 770 L1482 768 M1422 782 L1470 783"/>
<path fill="none" stroke="#1b1c1b" stroke-width="1.8" opacity="0.8" d="M1400 686 C1420 708 1445 735 1462 755"/>
<path fill="none" stroke="#1b1c1b" stroke-width="3" d="M1492 722 C1480 750 1455 778 1419 797"/>
<path fill="#90ac91" d="M1345 712 L1368 710 L1384 750 L1392 800 L1390 928 L1374 928 L1372 800 L1360 755Z"/>
<path fill="#98b699" opacity="0.7" filter="url(#blur1)" d="M1165 752 C1200 745 1250 752 1275 770 C1250 785 1200 790 1160 775Z"/>
<path fill="#1b1c1b" stroke="#7dbf80" stroke-width="1" d="M1262 742 L1278 736 L1300 734 L1316 744 L1314 760 L1295 764 L1272 758Z"/>
<path fill="#1b1c1b" stroke="#7dbf80" stroke-width="1" d="M1151 776 L1186 775 L1197 788 L1182 796 L1162 797 L1151 791Z"/>
<path fill="#1b1c1b" stroke="#7dbf80" stroke-width="1" d="M1252 799 L1285 793 L1298 776 L1326 778 L1332 806 L1312 806 L1275 806Z"/>
<path fill="#82a084" d="M1205 805 C1240 800 1290 805 1300 830 C1305 865 1290 895 1250 900 C1215 898 1200 870 1200 840Z"/>
<path fill="none" stroke="#1b1c1b" stroke-width="5" d="M1199 801 C1190 815 1186 832 1194 850 C1205 866 1216 876 1214 888 C1210 898 1198 898 1192 888 C1189 880 1192 872 1195 868"/>
<path fill="none" stroke="#1b1c1b" stroke-width="3" d="M1234 900 L1270 902"/>
<path fill="#1b1c1b" stroke="#7dbf80" stroke-width="1" d="M1298 808 L1322 806 L1332 830 L1336 880 L1334 928 L1318 928 L1318 880 L1310 850 L1300 830Z"/>
<path fill="none" stroke="#1b1c1b" stroke-width="2.5" d="M1346 830 C1352 824 1362 824 1366 832 M1346 850 L1368 848 M1348 870 L1370 868 M1346 890 L1370 888 M1346 908 L1370 906"/>
<path fill="#1b1c1b" d="M1390 790 L1401 786 L1400 928 L1390 928Z"/>
<path fill="#1b1c1b" opacity="0.8" d="M1370 800 L1377 800 L1375 928 L1369 928Z"/>
<path fill="#1b1c1b" opacity="0.85" d="M1320 860 L1326 860 L1326 928 L1320 928Z"/>
<path clip-path="url(#sac)" fill="#a2bfa3" opacity="0.5" filter="url(#blur3)" d="M1420 800 C1460 795 1490 810 1492 840 C1485 870 1470 890 1450 895 C1425 880 1410 840 1420 800Z"/>
<path fill="#303030" d="M1230 928 L1238 915 L1255 920 L1270 912 L1290 918 L1300 928Z"/>
<path fill="#303030" d="M1400 928 L1405 915 L1420 912 L1440 918 L1445 928Z"/>
<rect x="562" y="82" width="262" height="6.5" rx="3.2" fill="#5ac3ca"/>
<rect x="814" y="78" width="11" height="14" rx="4" fill="#5ac3ca"/>
<rect x="562" y="510.5" width="262" height="6.5" rx="3.2" fill="#5ac3ca"/>
<rect x="814" y="506.5" width="11" height="14" rx="4" fill="#5ac3ca"/>
<rect x="1080" y="510.5" width="262" height="6.5" rx="3.2" fill="#5ac3ca"/>
<rect x="1332" y="506.5" width="11" height="14" rx="4" fill="#5ac3ca"/>
<line x1="1573" y1="469" x2="1573" y2="424" stroke="#0000e0" stroke-width="2"/>
<path d="M1568 425 L1578 425 L1573 414Z" fill="#0000e0"/>
<path d="M1573 469 L1550 467 L1532 466" fill="none" stroke="#e00000" stroke-width="1.5"/>
<path d="M1533 462 L1533 471 L1522 466Z" fill="#a00000"/>
<line x1="1573" y1="469" x2="1556" y2="476" stroke="#00d000" stroke-width="1.5"/>
<circle cx="1553" cy="477" r="4" fill="#00b000"/>
<text x="1576" y="420" fill="#ddd" font-size="9" font-style="italic" font-weight="bold" font-family="Liberation Sans">S</text>
<text x="1535" y="461" fill="#ddd" font-size="9" font-style="italic" font-weight="bold" font-family="Liberation Sans">R</text>
<text x="1555" y="472" fill="#ddd" font-size="9" font-style="italic" font-weight="bold" font-family="Liberation Sans">A</text>
<rect x="555.5" y="494.0" width="1.5" height="1.8" fill="#aaa" opacity="0.7"/><rect x="555.5" y="497.2" width="1.5" height="1.8" fill="#aaa" opacity="0.7"/><rect x="555.5" y="500.4" width="1.5" height="1.8" fill="#aaa" opacity="0.7"/><rect x="555.5" y="503.6" width="1.5" height="1.8" fill="#aaa" opacity="0.7"/><rect x="555.5" y="506.8" width="1.5" height="1.8" fill="#aaa" opacity="0.7"/>
</g></svg>
</body></html>
